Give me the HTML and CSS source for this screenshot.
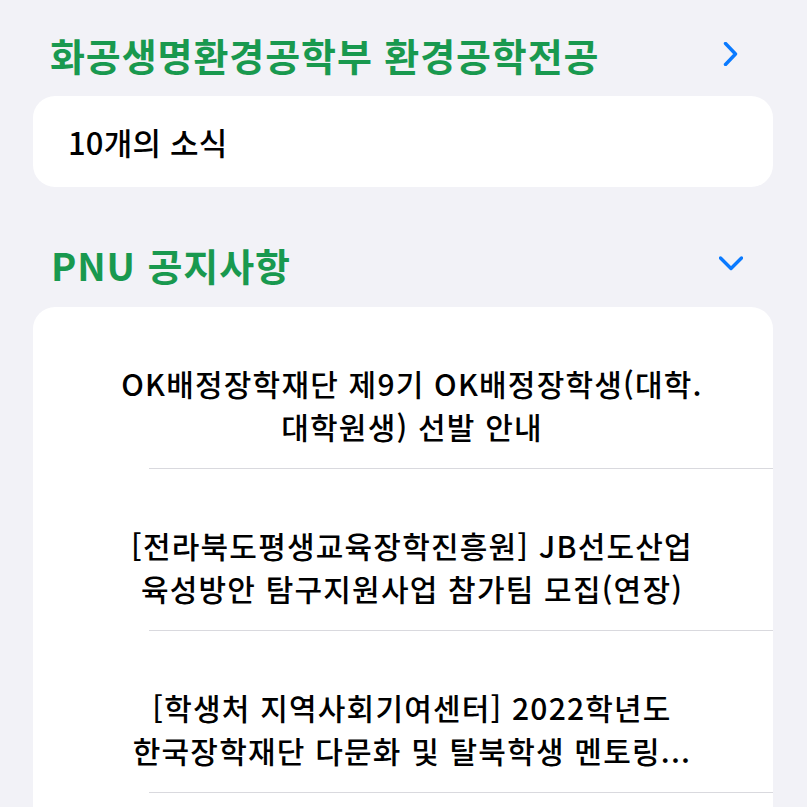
FILE: index.html
```html
<!DOCTYPE html>
<html lang="ko">
<head>
<meta charset="utf-8">
<link rel="stylesheet" href="styles.css">
</head>
<body>
<div class="page">
  <div class="section-header">
    <span class="section-title">화공생명환경공학부 환경공학전공</span>
    <span class="chev">
      <svg width="24" height="24" viewBox="0 0 24 24"><path d="M6.5 1.5 L16.5 12 L6.5 22.5" fill="none" stroke="#0a7aff" stroke-width="3.4" stroke-linecap="round" stroke-linejoin="round"/></svg>
    </span>
  </div>
  <div class="card card-summary">
    <span class="summary-text">10개의 소식</span>
  </div>

  <div class="section-header second">
    <span class="section-title">PNU 공지사항</span>
    <span class="chev">
      <svg width="24" height="24" viewBox="0 0 24 24"><path d="M1.5 6 L12 16.5 L22.5 6" fill="none" stroke="#0a7aff" stroke-width="3.4" stroke-linecap="round" stroke-linejoin="round"/></svg>
    </span>
  </div>
  <div class="card card-list">
    <div class="item">
      <div class="item-text">OK배정장학재단 제9기 OK배정장학생(대학.<br>대학원생) 선발 안내</div>
    </div>
    <div class="divider"></div>
    <div class="item">
      <div class="item-text">[전라북도평생교육장학진흥원] JB선도산업<br>육성방안 탐구지원사업 참가팀 모집(연장)</div>
    </div>
    <div class="divider"></div>
    <div class="item">
      <div class="item-text">[학생처 지역사회기여센터] 2022학년도<br>한국장학재단 다문화 및 탈북학생 멘토링...</div>
    </div>
    <div class="divider"></div>
    <div class="item item-rest"></div>
  </div>
</div>
</body>
</html>
```
FILE: styles.css
```css
html, body {
  margin: 0;
  padding: 0;
  background: #f2f2f7;
}
body {
  font-family: "Noto Sans CJK KR", "Noto Sans", sans-serif;
  color: #000;
  overflow: hidden;
}
.page {
  padding: 28px 34px 0 33px;
}
.section-header {
  display: flex;
  align-items: center;
  justify-content: space-between;
  height: 52px;
  padding: 0 30px 0 17px;
  margin-bottom: 16px;
}
.section-header.second {
  margin-top: 51px;
  margin-bottom: 17px;
  padding-left: 18px;
}
.section-title {
  font-size: 38px;
  font-weight: 700;
  color: #19994f;
  letter-spacing: 0.9px;
  white-space: nowrap;
}
.chev {
  width: 24px;
  height: 24px;
  display: flex;
}
.card {
  background: #fff;
  border-radius: 22px;
}
.card-summary {
  height: 91px;
  display: flex;
  align-items: center;
  padding-left: 35px;
}
.summary-text {
  font-size: 31px;
  font-weight: 500;
  letter-spacing: 0.2px;
}
.item {
  padding: 55px 34px 20px 52px;
}
.item-text {
  text-align: center;
  font-size: 30px;
  line-height: 43px;
  font-weight: 500;
  letter-spacing: 1.2px;
  white-space: nowrap;
}
.divider {
  height: 1px;
  margin-left: 116px;
  background: #d9d9de;
}
.item-rest {
  height: 120px;
}
```
